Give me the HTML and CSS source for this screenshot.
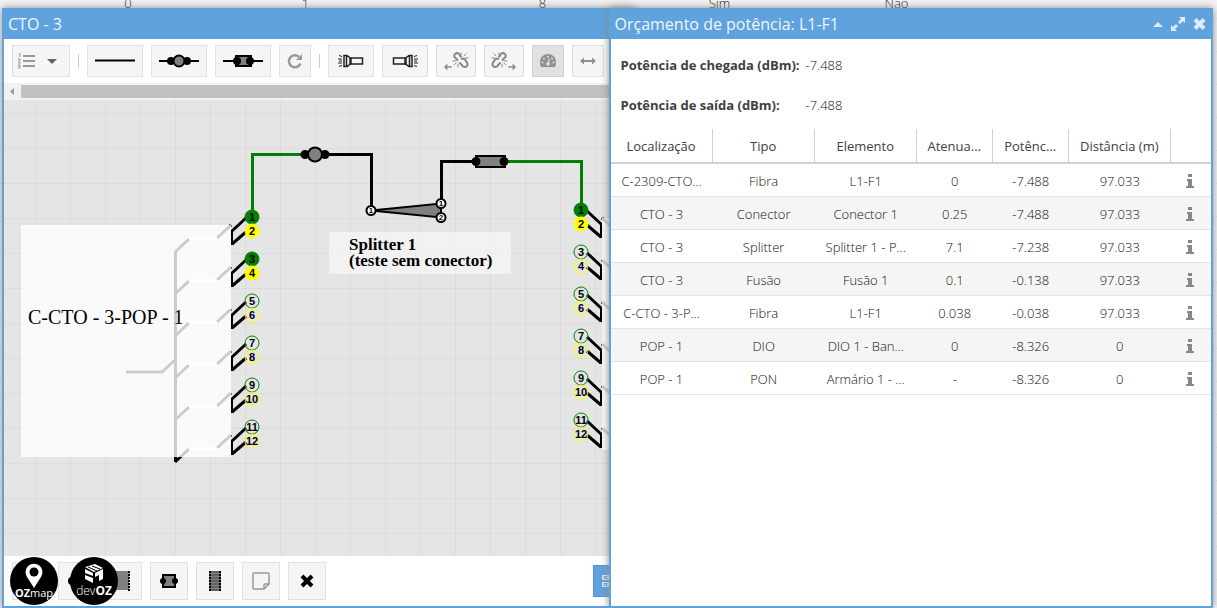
FILE: index.html
```html
<!DOCTYPE html>
<html lang="pt-BR">

<head>
    <meta charset="UTF-8">
    <meta name="viewport" content="width=device-width, initial-scale=1.0">
    <title>CTO - 3</title>
    <link rel="stylesheet" href="styles.css">
</head>

<body>
    <div class="back-row">
        <span></span><span>0</span><span>1</span><span></span><span>8</span><span>Sim</span><span>Não</span>
    </div>

    <section class="window window-box">
        <header class="window-header">
            <h2>CTO - 3</h2>
        </header>
        <div class="toolbar">
            <button class="btn w58" aria-label="Lista">
                <svg width="46" height="20" viewBox="0 0 46 20">
                    <path d="M5 5h12M5 10h12M5 15h12" stroke="#999" stroke-width="2" />
                    <path d="M1 3l1-1v4M0 8h2v2H0v2h3M0 14h2v3H0M2 15H0" fill="none" stroke="#999" />
                    <path d="M29 8h10l-5 5z" fill="#666" />
                </svg>
            </button>
            <span class="separator"></span>
            <button class="btn w56" aria-label="Fibra">
                <svg width="40" height="16"><path d="M0 7.500H40" stroke="#000" stroke-width="2" /></svg>
            </button>
            <button class="btn w56" aria-label="Conector">
                <svg width="40" height="16">
                    <path d="M0 8H40" stroke="#000" stroke-width="2" />
                    <circle cx="12" cy="8" r="4" /><circle cx="28" cy="8" r="4" />
                    <circle cx="20" cy="8" r="5.500" fill="#808080" stroke="#000" stroke-width="2" />
                </svg>
            </button>
            <button class="btn w56" aria-label="Fusão">
                <svg width="40" height="16">
                    <path d="M0 8H40" stroke="#000" stroke-width="2" />
                    <rect x="13" y="3" width="15" height="10" fill="#808080" stroke="#000" stroke-width="2" />
                    <circle cx="14" cy="8" r="4" /><circle cx="27" cy="8" r="4" />
                </svg>
            </button>
            <button class="btn w32" aria-label="Girar">
                <svg width="16" height="16" viewBox="0 0 16 16">
                    <path d="M13.500 10.500A6 6 0 1 1 12 3.800" fill="none" stroke="#999" stroke-width="2.500" />
                    <path d="M15 1v6H9z" fill="#999" />
                </svg>
            </button>
            <span class="separator"></span>
            <button class="btn w46" aria-label="Lanterna à direita">
                <svg width="26" height="14" viewBox="0 0 26 14"><use href="#torch" /></svg>
            </button>
            <button class="btn w46" aria-label="Lanterna à esquerda">
                <svg width="26" height="14" viewBox="0 0 26 14"><use href="#torch" transform="translate(26 0) scale(-1 1)" /></svg>
            </button>
            <button class="btn w40" aria-label="Desconectar à esquerda">
                <svg width="26" height="20" viewBox="0 0 26 20"><use href="#unlink" /></svg>
            </button>
            <button class="btn w40" aria-label="Desconectar à direita">
                <svg width="26" height="20" viewBox="0 0 26 20"><use href="#unlink" transform="translate(26 0) scale(-1 1)" /></svg>
            </button>
            <button class="btn w32 active" aria-label="Potência">
                <svg width="16" height="14" viewBox="0 0 16 14">
                    <path d="M0 8a8 8 0 0 1 16 0q0 3-1 5H1Q0 11 0 8z" fill="#909090" />
                    <g fill="#e1e1e1">
                        <circle cx="2.500" cy="8.500" r="1" /><circle cx="4" cy="4.500" r="1" />
                        <circle cx="8" cy="2.800" r="1" /><circle cx="12" cy="4.500" r="1" />
                        <circle cx="13.500" cy="8.500" r="1" /><circle cx="8" cy="10" r="1.800" />
                    </g>
                    <path d="M8 10l1.200-5" stroke="#e1e1e1" stroke-width="1.200" />
                </svg>
            </button>
            <button class="btn w32" aria-label="Largura">
                <svg width="16" height="8" viewBox="0 0 16 8"><path d="M0 4l4-3.500V3h8V.5L16 4l-4 3.500V5H4v2.500z" fill="#909090" /></svg>
            </button>
        </div>
        <div class="scrollbar">
            <svg width="9" height="9" viewBox="0 0 9 9"><path d="M6 1v7L2 4.500z" fill="#999" /></svg>
            <span class="thumb"></span>
        </div>

        <svg class="canvas">
            <defs>
                <pattern id="grid" x="14" y="-4" width="35" height="35" patternUnits="userSpaceOnUse">
                    <path d="M17.500 0V35M0 17.500H35" stroke="#dcdcdc" />
                </pattern>
                <g id="torch" fill="none" stroke="#222">
                    <path d="M12 4h12.500v6H12z" stroke-width="1.500" />
                    <path d="M6 1.500h3l4 3v5l-4 3H6zM8.500 1.500v11" stroke-width="1.500" />
                    <path d="M0 5h4M0 9h4M1 1.500l3 1M1 12.500l3-1M1 7h3" />
                </g>
                <g id="unlink" fill="none" stroke="#888" stroke-linecap="round">
                    <path d="M14.500 9l-3-3q-1-3 2.500-4 2 0 4 4M19 8q2-1 3.500 1.500 3 3 1.500 5.500-2.500 2-4.500 0L17 12" stroke-width="2" />
                    <path d="M18 4V2M21 5l2-2M22 7h3M10 10h3M11 14l2-2M15 13v3" />
                    <path d="M2 16h6M4 14l-2 2 2 2" stroke-width="1.500" />
                </g>
                <!-- par de fibras do lado esquerdo -->
                <g id="pair-left" fill="none" stroke="#000" stroke-width="3">
                    <path d="M-77 35l14-13M-35 21l14-13" />
                    <path d="M-63 21.500h28" stroke="#fff" />
                </g>
                <g id="ends-left" fill="none" stroke="#000">
                    <path d="M-6 1l-14 13M-20 27l14-12" stroke-width="3" />
                    <path d="M-20 13v15" stroke-width="2" />
                </g>
                <g id="pair-right" fill="none" stroke="#000">
                    <path d="M6 1l14 13M6 15l14 12" stroke-width="3" />
                    <path d="M20 13v15" stroke-width="2" />
                </g>
            </defs>
            <rect width="100%" height="100%" fill="#e5e5e5" />
            <rect width="100%" height="100%" fill="url(#grid)" />

            <!-- cabo esquerdo -->
            <use href="#pair-left" x="248" y="117" />
            <use href="#pair-left" x="248" y="159" />
            <use href="#pair-left" x="248" y="201" />
            <use href="#pair-left" x="248" y="243" />
            <use href="#pair-left" x="248" y="285" />
            <use href="#pair-left" x="248" y="327" />
            <path d="M171.500 152V362M122 272h36l14-13" fill="none" stroke="#000" stroke-width="3" />
            <rect x="17" y="125" width="210" height="232" fill="#fff" fill-opacity=".8" />
            <use href="#ends-left" x="248" y="117" />
            <use href="#ends-left" x="248" y="159" />
            <use href="#ends-left" x="248" y="201" />
            <use href="#ends-left" x="248" y="243" />
            <use href="#ends-left" x="248" y="285" />
            <use href="#ends-left" x="248" y="327" />
            <text class="cable-name" x="24" y="224">C-CTO - 3-POP - 1</text>

            <!-- cabo direito -->
            <path d="M598 118l14 13M598 160l14 13M598 202l14 13M598 244l14 13M598 286l14 13M598 328l14 13" stroke="#000" stroke-width="3" />
            <rect x="598" y="118" width="210" height="232" fill="#fff" fill-opacity=".8" />
            <use href="#pair-right" x="577" y="110" />
            <use href="#pair-right" x="577" y="152" />
            <use href="#pair-right" x="577" y="194" />
            <use href="#pair-right" x="577" y="236" />
            <use href="#pair-right" x="577" y="278" />
            <use href="#pair-right" x="577" y="320" />

            <!-- ligações -->
            <g fill="none" stroke-width="3">
                <path d="M248.500 117V54.500H301" stroke="#008000" />
                <path d="M321 54.500h46.500V110M437.500 104V61.500H472" stroke="#000" />
                <path d="M500 61.500h77.500V110" stroke="#008000" />
            </g>
            <g stroke="#000" stroke-width="2">
                <circle cx="301" cy="54.500" r="3.500" />
                <circle cx="321" cy="54.500" r="3.500" />
                <circle cx="311" cy="54.500" r="7" fill="#808080" />
                <rect x="472" y="56" width="29" height="11" fill="#808080" />
                <circle cx="472" cy="61.500" r="3.500" />
                <circle cx="500" cy="61.500" r="3.500" />
                <path d="M367 110.500l70-7v14z" fill="#808080" />
                <g fill="#fff">
                    <circle cx="367" cy="110.500" r="4.500" />
                    <circle cx="437" cy="103.500" r="4.500" />
                    <circle cx="437" cy="117.500" r="4.500" />
                </g>
            </g>
            <g class="small-port">
                <text x="367" y="113">1</text>
                <text x="437" y="106">1</text>
                <text x="437" y="120">2</text>
            </g>
            <rect x="325" y="132" width="182" height="42" fill="#fff" fill-opacity=".5" />
            <text class="splitter-name" x="345" y="150">Splitter 1</text>
            <text class="splitter-name" x="345" y="166">(teste sem conector)</text>

            <!-- portas -->
            <g class="port">
                <circle class="green on" cx="248" cy="117" r="7" /><text x="248" y="121">1</text>
                <circle class="yellow on" cx="248" cy="131" r="7" /><text x="248" y="135">2</text>
                <circle class="green on" cx="248" cy="159" r="7" /><text x="248" y="163">3</text>
                <circle class="yellow on" cx="248" cy="173" r="7" /><text x="248" y="177">4</text>
                <circle class="green" cx="248" cy="201" r="7" /><text x="248" y="205">5</text>
                <circle class="yellow" cx="248" cy="215" r="7" /><text x="248" y="219">6</text>
                <circle class="green" cx="248" cy="243" r="7" /><text x="248" y="247">7</text>
                <circle class="yellow" cx="248" cy="257" r="7" /><text x="248" y="261">8</text>
                <circle class="green" cx="248" cy="285" r="7" /><text x="248" y="289">9</text>
                <circle class="yellow" cx="248" cy="299" r="7" /><text x="248" y="303">10</text>
                <circle class="green" cx="248" cy="327" r="7" /><text x="248" y="331">11</text>
                <circle class="yellow" cx="248" cy="341" r="7" /><text x="248" y="345">12</text>
            </g>
            <g class="port">
                <circle class="green on" cx="577" cy="110" r="7" /><text x="577" y="114">1</text>
                <circle class="yellow on" cx="577" cy="124" r="7" /><text x="577" y="128">2</text>
                <circle class="green" cx="577" cy="152" r="7" /><text x="577" y="156">3</text>
                <circle class="yellow" cx="577" cy="166" r="7" /><text x="577" y="170">4</text>
                <circle class="green" cx="577" cy="194" r="7" /><text x="577" y="198">5</text>
                <circle class="yellow" cx="577" cy="208" r="7" /><text x="577" y="212">6</text>
                <circle class="green" cx="577" cy="236" r="7" /><text x="577" y="240">7</text>
                <circle class="yellow" cx="577" cy="250" r="7" /><text x="577" y="254">8</text>
                <circle class="green" cx="577" cy="278" r="7" /><text x="577" y="282">9</text>
                <circle class="yellow" cx="577" cy="292" r="7" /><text x="577" y="296">10</text>
                <circle class="green" cx="577" cy="320" r="7" /><text x="577" y="324">11</text>
                <circle class="yellow" cx="577" cy="334" r="7" /><text x="577" y="338">12</text>
            </g>
        </svg>

        <footer class="bottom-bar">
            <button class="btn" aria-label="Cabo"></button>
            <button class="btn w84" aria-label="Splitter">
                <svg width="64" height="22">
                    <circle cx="4" cy="11" r="4" />
                    <path d="M4 11L44 2v18z" fill="#808080" stroke="#000" />
                    <rect x="44" y="1" width="17" height="19" fill="#808080" />
                    <path d="M61 1v20" stroke="#000" stroke-width="2" stroke-dasharray="2 1" />
                </svg>
            </button>
            <button class="btn" aria-label="Caixa de fusão">
                <svg width="18" height="16">
                    <rect x="3" y="2" width="12" height="12" fill="#808080" stroke="#000" stroke-width="2" />
                    <circle cx="3" cy="8" r="3" /><circle cx="15" cy="8" r="3" />
                </svg>
            </button>
            <button class="btn" aria-label="Bandeja">
                <svg width="12" height="20">
                    <rect width="12" height="20" fill="#808080" />
                    <path d="M0 1h12M0 4h12M0 7h12M0 10h12M0 13h12M0 16h12M0 19h12" stroke="#444" />
                    <path d="M1 0v20M11 0v20" stroke="#000" stroke-width="2" stroke-dasharray="2 1" />
                </svg>
            </button>
            <button class="btn" aria-label="Nota">
                <svg width="18" height="18" viewBox="0 0 18 18">
                    <path d="M2 1h14q1 0 1 1v10l-5 5H2q-1 0-1-1V2q0-1 1-1zM17 12h-4q-1 0-1 1v4" fill="none" stroke="#999" stroke-width="1.500" />
                </svg>
            </button>
            <button class="btn" aria-label="Excluir">
                <svg width="14" height="14" viewBox="0 0 14 14"><path d="M2 2l10 10M12 2L2 12" stroke="#000" stroke-width="4" /></svg>
            </button>
            <button class="btn btn-view" aria-label="Visualização">
                <svg width="14" height="14" viewBox="0 0 14 14">
                    <path d="M0 1h14v5H0zM0 8h14v5H0z" fill="#dfecf8" />
                    <path d="M2 2.500h3v2H2zM2 9.500h3v2H2z" fill="none" stroke="#5fa2dd" />
                </svg>
            </button>
        </footer>
    </section>

    <section class="window window-power">
        <header class="window-header">
            <h2>Orçamento de potência: L1-F1</h2>
            <div class="tools">
                <button aria-label="Recolher"><svg width="10" height="14"><path d="M0 10l5-5 5 5z" fill="#dfecf8" /></svg></button>
                <button aria-label="Maximizar">
                    <svg width="14" height="14" viewBox="0 0 14 14">
                        <path d="M8 0h6v6l-2-2-3 3-2-2 3-3zM6 14H0V8l2 2 3-3 2 2-3 3z" fill="#dfecf8" />
                    </svg>
                </button>
                <button aria-label="Fechar"><svg width="13" height="14" viewBox="0 0 13 14"><path d="M2 2.500l9 9M11 2.500l-9 9" stroke="#dfecf8" stroke-width="4" /></svg></button>
            </div>
        </header>
        <dl class="summary">
            <dt>Potência de chegada (dBm):</dt>
            <dd>-7.488</dd>
            <dt>Potência de saída (dBm):</dt>
            <dd>-7.488</dd>
        </dl>
        <table class="power-table">
            <colgroup>
                <col class="c-wide"><col class="c-wide"><col class="c-wide">
                <col class="c-mid"><col class="c-mid"><col class="c-wide"><col>
            </colgroup>
            <thead>
                <tr>
                    <th>Localização</th><th>Tipo</th><th>Elemento</th><th>Atenua...</th><th>Potênc...</th><th>Distância (m)</th><th></th>
                </tr>
            </thead>
            <tbody>
                <tr><td>C-2309-CTO...</td><td>Fibra</td><td>L1-F1</td><td>0</td><td>-7.488</td><td>97.033</td>
                    <td><button aria-label="Informações"><svg width="8" height="14"><use href="#info" /></svg></button></td></tr>
                <tr><td>CTO - 3</td><td>Conector</td><td>Conector 1</td><td>0.25</td><td>-7.488</td><td>97.033</td>
                    <td><button aria-label="Informações"><svg width="8" height="14"><use href="#info" /></svg></button></td></tr>
                <tr><td>CTO - 3</td><td>Splitter</td><td>Splitter 1 - P...</td><td>7.1</td><td>-7.238</td><td>97.033</td>
                    <td><button aria-label="Informações"><svg width="8" height="14"><use href="#info" /></svg></button></td></tr>
                <tr><td>CTO - 3</td><td>Fusão</td><td>Fusão 1</td><td>0.1</td><td>-0.138</td><td>97.033</td>
                    <td><button aria-label="Informações"><svg width="8" height="14"><use href="#info" /></svg></button></td></tr>
                <tr><td>C-CTO - 3-P...</td><td>Fibra</td><td>L1-F1</td><td>0.038</td><td>-0.038</td><td>97.033</td>
                    <td><button aria-label="Informações"><svg width="8" height="14"><use href="#info" /></svg></button></td></tr>
                <tr><td>POP - 1</td><td>DIO</td><td>DIO 1 - Ban...</td><td>0</td><td>-8.326</td><td>0</td>
                    <td><button aria-label="Informações"><svg width="8" height="14"><use href="#info" /></svg></button></td></tr>
                <tr><td>POP - 1</td><td>PON</td><td>Armário 1 - ...</td><td>-</td><td>-8.326</td><td>0</td>
                    <td><button aria-label="Informações"><svg width="8" height="14"><use href="#info" /></svg></button></td></tr>
            </tbody>
        </table>
        <svg width="0" height="0" class="defs">
            <defs><path id="info" d="M2 0h4v3H2zM1 5h5v7h2v2H0v-2h2V7H1z" fill="#888" /></defs>
        </svg>
    </section>

    <div class="logos">
        <svg width="48" height="48" viewBox="0 0 48 48">
            <circle cx="24" cy="24" r="24" />
            <path d="M24 31l-7-11a8.500 8.500 0 1 1 14 0z" fill="#fff" />
            <circle cx="24" cy="15" r="4.500" />
            <text x="24" y="40" class="logo-text"><tspan class="strong">OZ</tspan>map</text>
        </svg>
        <svg width="48" height="48" viewBox="0 0 48 48">
            <circle cx="24" cy="24" r="24" />
            <path d="M15 10l10-3 8 4-9 4zM15 12l8 4v3l-8-3zM15 18l8 3v5l-8-4zM25 16l8-4v10l-4 2v-6l-4 2z" fill="#fff" />
            <path d="M18 10l9 4M22 9l8 3" stroke="#000" />
            <text x="24" y="38" class="logo-text dev">dev<tspan class="strong">OZ</tspan></text>
        </svg>
    </div>
</body>

</html>
```
FILE: styles.css
```css
* {
    box-sizing: border-box;
}

body {
    margin: 0;
    height: 100vh;
    overflow: hidden;
    font-family: "Open Sans", sans-serif;
    font-size: 13px;
    color: #404040;
    background: repeating-linear-gradient(#f5f5f5 0, #f5f5f5 32px, #e4e4e4 32px, #e4e4e4 33px) 0 -14px;
}

button {
    padding: 0;
    border: 0;
    background: none;
    cursor: pointer;
}

svg {
    display: block;
}

.back-row {
    display: grid;
    grid-template-columns: 39px 178px 177px 60px 177px 177px 177px;
    margin-top: -14px;
    line-height: 35px;
    text-align: center;
    font-weight: 300;
    color: #111;
}

/* 窗口 */
.window {
    position: absolute;
    top: 8px;
    bottom: 0;
    display: flex;
    flex-direction: column;
    border: 2px solid #5fa2dd;
    background: #fff;
    box-shadow: 0 0 8px #888;
}

.window-box {
    left: 2px;
    width: 52%;
}

.window-power {
    left: 50%;
    right: 4px;
}

.window-header {
    display: flex;
    justify-content: space-between;
    align-items: center;
    height: 29px;
    padding: 0 5px 2px 4px;
    background: #5fa2dd;
    color: #f0f6fc;
}

.window-header h2 {
    margin: 0;
    font-size: 16px;
    line-height: 24px;
    font-weight: 400;
}

.tools {
    display: flex;
    gap: 8px;
}

.toolbar {
    display: flex;
    align-items: center;
    gap: 8px;
    height: 44px;
    padding: 0 8px;
    overflow: hidden;
}

.separator {
    flex: none;
    width: 1px;
    height: 14px;
    background: #ccc;
}

.btn {
    flex: none;
    display: flex;
    align-items: center;
    justify-content: center;
    width: 38px;
    height: 38px;
    border: 1px solid #e1e1e1;
    background: #f5f5f5;
}

.toolbar .btn {
    height: 32px;
}

.toolbar .active {
    border-color: #d0d0d0;
    background: #e1e1e1;
}

.w32 { width: 32px; }
.w40 { width: 40px; }
.w46 { width: 46px; }
.w56 { width: 56px; }
.w58 { width: 58px; }
.w84 { width: 84px; }

.scrollbar {
    display: flex;
    align-items: center;
    gap: 4px;
    height: 17px;
    padding: 0 4px;
    background: #f1f1f1;
}

.thumb {
    flex: 1;
    height: 13px;
    background: #c1c1c1;
}

/* 画布 */
.canvas {
    flex: 1;
    width: 100%;
    min-height: 0;
}

.cable-name {
    font: 20px "Liberation Serif", serif;
}

.splitter-name {
    font: bold 17px "Liberation Serif", serif;
}

.port text,
.small-port text {
    font: bold 11px "Liberation Sans", sans-serif;
    text-anchor: middle;
}

.small-port text {
    font-size: 8px;
}

.port circle {
    fill: none;
}

.port .green {
    stroke: #008000;
}

.port .yellow {
    stroke: #ff0;
}

.port .green.on {
    fill: #008000;
}

.port .yellow.on {
    fill: #ff0;
}

.bottom-bar {
    display: flex;
    align-items: center;
    gap: 8px;
    height: 50px;
    padding: 0 8px;
}

.bottom-bar .btn-view {
    width: 32px;
    height: 32px;
    margin-left: auto;
    border-color: #4b93d3;
    background: #5fa2dd;
}

/* 右侧功率表 */
.summary {
    display: grid;
    grid-template-columns: 185px 1fr;
    margin: 0;
    padding: 6px 10px 4px;
    line-height: 40px;
}

.summary dt {
    font-weight: 700;
}

.summary dd {
    margin: 0;
    font-weight: 300;
    color: #111;
}

.power-table {
    width: 100%;
    table-layout: fixed;
    border-collapse: separate;
    border-spacing: 0;
    text-align: center;
}

.c-wide { width: 17%; }
.c-mid { width: 76px; }

.power-table th,
.power-table td {
    height: 33px;
    padding: 1px 6px 0;
    overflow: hidden;
    white-space: nowrap;
    font-weight: 300;
    color: #111;
    border-bottom: 1px solid #e4e4e4;
}

.power-table th {
    height: 35px;
    padding: 0 6px;
    font-weight: 400;
    color: #404040;
    border-right: 1px solid #d0d0d0;
    border-bottom: 2px solid #d0d0d0;
}

.power-table th:last-child {
    border-right: 0;
}

.power-table tr:nth-child(even) td {
    background: #f5f5f5;
}

.power-table td:last-child {
    padding: 0 8px 2px 6px;
}

.power-table button {
    vertical-align: middle;
}

.defs {
    position: absolute;
}

.logos {
    position: absolute;
    left: 10px;
    bottom: 3px;
    display: flex;
    gap: 12px;
}

.logo-text {
    font-size: 11px;
    fill: #fff;
    text-anchor: middle;
}

.logo-text .strong {
    font-weight: 700;
}

.logo-text.dev {
    font-size: 12px;
    font-weight: 300;
}
```
